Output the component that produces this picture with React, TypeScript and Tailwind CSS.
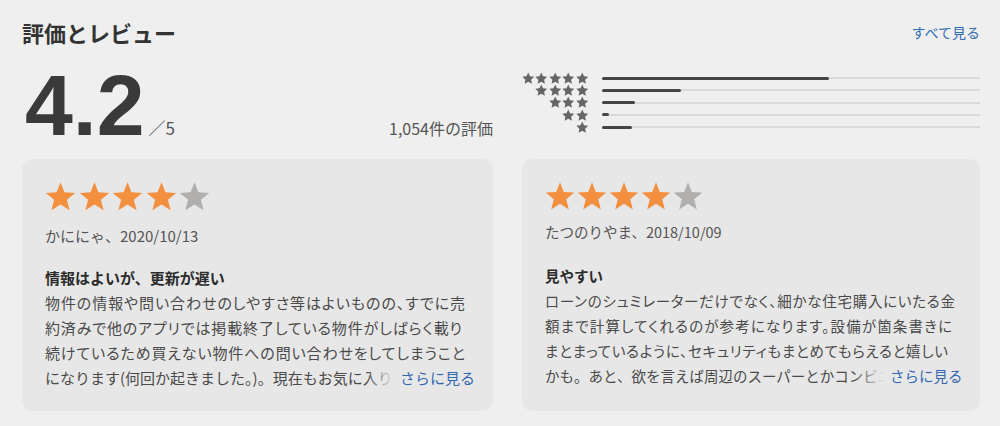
import React from 'react';

function starPoints(inner: number) {
  const pts: string[] = [];
  for (let i = 0; i < 10; i++) {
    const a = ((-90 + i * 36) * Math.PI) / 180;
    const rad = i % 2 === 0 ? 12 : inner;
    pts.push(`${(12 + rad * Math.cos(a)).toFixed(2)},${(13 + rad * Math.sin(a)).toFixed(2)}`);
  }
  return pts.join(' ');
}

const BIG_STAR = starPoints(5.2);
const SMALL_STAR = starPoints(5.8);

function Star({ size, className, small }: { size: number; className: string; small?: boolean }) {
  return (
    <svg width={size} height={size} viewBox="0 0 24 24" className="shrink-0">
      <polygon points={small ? SMALL_STAR : BIG_STAR} className={className} />
    </svg>
  );
}

const distribution = [
  { stars: 5, pct: 60 },
  { stars: 4, pct: 21 },
  { stars: 3, pct: 8.7 },
  { stars: 2, pct: 1.9 },
  { stars: 1, pct: 8 },
];

type Review = {
  author: string;
  date: string;
  title: string;
  lines: { text: string; width: number }[];
  last: string;
  lastWidth: number;
};

const reviews: Review[] = [
  {
    author: 'かににゃ',
    date: '2020/10/13',
    title: '情報はよいが、更新が遅い',
    lines: [
      { text: '物件の情報や問い合わせのしやすさ等はよいものの、すでに売', width: 420 },
      { text: '約済みで他のアプリでは掲載終了している物件がしばらく載り', width: 417 },
      { text: '続けているため買えない物件への問い合わせをしてしまうこと', width: 420 },
    ],
    last: 'になります(何回か起きました。)。現在もお気に入り',
    lastWidth: 350,
  },
  {
    author: 'たつのりやま',
    date: '2018/10/09',
    title: '見やすい',
    lines: [
      { text: 'ローンのシュミレーターだけでなく、細かな住宅購入にいたる金', width: 410 },
      { text: '額まで計算してくれるのが参考になります。設備が箇条書きに', width: 407 },
      { text: 'まとまっているように、セキュリティもまとめてもらえると嬉しい', width: 403 },
    ],
    last: 'かも。あと、欲を言えば周辺のスーパーとかコンビニ',
    lastWidth: 340,
  },
];

function ReviewCard({ review, big }: { review: Review; big: boolean }) {
  const text = big ? 'text-[15px]' : 'text-[14.5px]';
  return (
    <div className={`h-[252px] rounded-[10px] bg-[#e7e7e7] pl-[23px] pt-[22px] ${text}`}>
      <div className={`flex ${big ? 'gap-[2.5px]' : 'gap-[2px]'}`}>
        {[0, 1, 2, 3].map((i) => (
          <Star key={i} size={big ? 31 : 30} className="fill-[#f3903f]" />
        ))}
        <Star size={big ? 31 : 30} className="fill-[#b1afad]" />
      </div>
      <div className={`leading-[22px] text-[#555] ${big ? 'mt-[13px]' : 'mt-[10px]'}`}>
        {review.author}、{review.date}
      </div>
      <div className={`font-bold leading-[25px] text-[#2b2b2b] ${big ? 'mt-[18px]' : 'mt-[20px]'}`}>
        {review.title}
      </div>
      <div className="leading-[25px] text-[#4a4a4a]">
        {review.lines.map((l, i) => (
          <div key={i} className="[font-feature-settings:'palt'] [text-align-last:justify]" style={{ width: l.width }}>
            {l.text}
          </div>
        ))}
        <div className="flex items-center">
          <span className="relative overflow-hidden whitespace-nowrap" style={{ width: review.lastWidth }}>
            {review.last}
            <span className="absolute right-0 top-0 h-full w-[30px] bg-gradient-to-r from-transparent to-[#e7e7e7]" />
          </span>
          <span className="ml-[5px] text-[#3569b3]">さらに見る</span>
        </div>
      </div>
    </div>
  );
}

export default function App() {
  return (
    <div className="h-[426px] w-[1000px] overflow-hidden bg-[#efefef] pl-[22px] pr-[20px] pt-[18px] font-['Noto_Sans_CJK_JP',sans-serif]">
      <div className="flex items-center justify-between">
        <h2 className="text-[22px] font-bold leading-[28px] text-[#333]">評価とレビュー</h2>
        <span className="text-[14px] text-[#2f6db5]">すべて見る</span>
      </div>

      <div className="mt-[16px] grid grid-cols-[471px_458px] gap-x-[29px]">
        <div className="flex items-baseline justify-between">
          <div className="flex items-baseline pl-[3px]">
            <span className="font-['Liberation_Sans',sans-serif] text-[86px] font-bold leading-none text-[#3a3a3a]">
              4.2
            </span>
            <span className="ml-[4px] text-[17px] text-[#555]">／5</span>
          </div>
          <span className="text-[16px] text-[#555]">1,054件の評価</span>
        </div>

        <div className="mt-[10px]">
          {distribution.map((d) => (
            <div key={d.stars} className="flex h-[12.25px] items-center">
              <div className="flex w-[66px] justify-end gap-[1px]">
                {Array.from({ length: d.stars }).map((_, i) => (
                  <Star key={i} size={12.5} small className="fill-[#666]" />
                ))}
              </div>
              <div className="ml-[14px] flex h-[3px] flex-1 items-center">
                <div className="h-[3px] rounded-full bg-[#454545]" style={{ width: `${d.pct}%` }} />
                <div className="h-[2px] flex-1 bg-[#dadada]" />
              </div>
            </div>
          ))}
        </div>
      </div>

      <div className="mt-[11px] grid grid-cols-[471px_458px] gap-x-[29px]">
        <ReviewCard review={reviews[0]} big />
        <ReviewCard review={reviews[1]} big={false} />
      </div>
    </div>
  );
}
